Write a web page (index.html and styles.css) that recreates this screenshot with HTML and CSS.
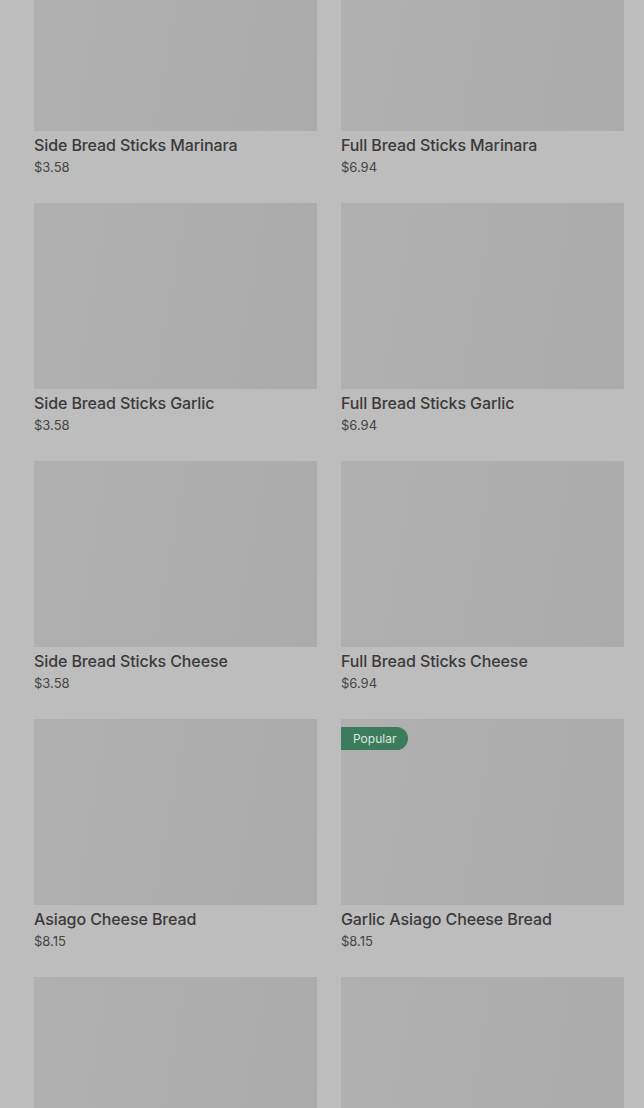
FILE: index.html
```html
<!DOCTYPE html>
<html>

<head>
	<title>Menu - Breads</title>
	<link rel="stylesheet" href="styles.css">
</head>

<body>
	<div class="menu">
		<div class="item-grid">
			<div class="item">
				<div class="item-image"></div>
				<div class="item-name">Side Bread Sticks Marinara</div>
				<div class="item-price">$3.58</div>
			</div>
			<div class="item">
				<div class="item-image"></div>
				<div class="item-name">Full Bread Sticks Marinara</div>
				<div class="item-price">$6.94</div>
			</div>
			<div class="item">
				<div class="item-image"></div>
				<div class="item-name">Side Bread Sticks Garlic</div>
				<div class="item-price">$3.58</div>
			</div>
			<div class="item">
				<div class="item-image"></div>
				<div class="item-name">Full Bread Sticks Garlic</div>
				<div class="item-price">$6.94</div>
			</div>
			<div class="item">
				<div class="item-image"></div>
				<div class="item-name">Side Bread Sticks Cheese</div>
				<div class="item-price">$3.58</div>
			</div>
			<div class="item">
				<div class="item-image"></div>
				<div class="item-name">Full Bread Sticks Cheese</div>
				<div class="item-price">$6.94</div>
			</div>
			<div class="item">
				<div class="item-image"></div>
				<div class="item-name">Asiago Cheese Bread</div>
				<div class="item-price">$8.15</div>
			</div>
			<div class="item">
				<div class="item-image">
					<span class="badge">Popular</span>
				</div>
				<div class="item-name">Garlic Asiago Cheese Bread</div>
				<div class="item-price">$8.15</div>
			</div>
			<!-- next row, only the pictures are in view -->
			<div class="item">
				<div class="item-image"></div>
			</div>
			<div class="item">
				<div class="item-image"></div>
			</div>
		</div>
	</div>
</body>

</html>
```

FILE: styles.css
```css
body {
	margin: 0;
	padding: 0;
	font-family: Inter, "Noto Sans", sans-serif;
	background-color: #bdbdbd;
	color: #3a3a3a;
	overflow: hidden;
}

.menu {
	margin-top: -55px;
	padding: 0 20px 0 34px;
}

.item-grid {
	display: grid;
	grid-template-columns: 1fr 1fr;
	column-gap: 24px;
	row-gap: 27px;
}

.item {
	display: flex;
	flex-direction: column;
}

.item-image {
	position: relative;
	height: 186px;
	background: linear-gradient(100deg, #b0b0b0 0%, #adadad 60%, #ababab 100%);
}

.badge {
	position: absolute;
	top: 8px;
	left: 0;
	padding: 0 12px;
	height: 23px;
	line-height: 23px;
	font-size: 12px;
	color: #dce8e1;
	background-color: #3b7c5d;
	border-radius: 0 12px 12px 0;
}

.item-name {
	margin-top: 4px;
	font-size: 16px;
	font-weight: 500;
	line-height: 20px;
	letter-spacing: -0.1px;
}

.item-price {
	margin-top: 3px;
	font-size: 13px;
	line-height: 18px;
	color: #454545;
}
```
